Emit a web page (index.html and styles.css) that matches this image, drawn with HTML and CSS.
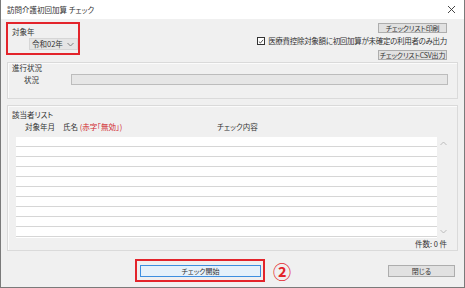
FILE: index.html
```html
<!DOCTYPE html>
<html lang="ja">
<head>
    <meta charset="UTF-8">
    <title>訪問介護初回加算 チェック</title>
    <link rel="stylesheet" href="styles.css">
</head>
<body>
    <div class="window">
        <div class="titlebar">
            <span class="title">訪問介護初回加算 チェック</span>
            <svg class="close-x" width="9" height="9" viewBox="0 0 9 9">
                <path d="M1 1 L8 8 M8 1 L1 8" stroke="#333" stroke-width="0.9" fill="none"/>
            </svg>
        </div>

        <div class="body">
            <!-- 対象年と出力ボタン -->
            <div class="top">
                <div class="year-box">
                    <div class="label">対象年</div>
                    <div class="select">
                        <span>令和02年</span>
                        <svg width="7" height="5" viewBox="0 0 7 5">
                            <path d="M0.5 1 L3.5 4 L6.5 1" stroke="#777" stroke-width="0.9" fill="none"/>
                        </svg>
                    </div>
                </div>
                <div class="actions">
                    <button class="btn btn-small">チェックリスト印刷</button>
                    <label class="check">
                        <span class="checkbox">
                            <svg width="7" height="7" viewBox="0 0 7 7">
                                <path d="M1 3.6 L2.8 5.3 L6 1.5" stroke="#222" stroke-width="0.9" fill="none"/>
                            </svg>
                        </span>
                        医療費控除対象額に初回加算が未確定の利用者のみ出力
                    </label>
                    <button class="btn btn-small">チェックリストCSV出力</button>
                </div>
            </div>

            <!-- 進行状況 -->
            <div class="group progress-group">
                <div class="group-title">進行状況</div>
                <div class="progress-row">
                    <span class="progress-label">状況</span>
                    <div class="progress"></div>
                </div>
            </div>

            <!-- 該当者リスト -->
            <div class="group list-group">
                <div class="group-title">該当者リスト</div>
                <div class="list-head">
                    <span class="col-month">対象年月</span>
                    <span class="col-name">氏名 <em class="red">(赤字「無効」)</em></span>
                    <span class="col-check">チェック内容</span>
                </div>
                <div class="list-wrap">
                    <div class="list">
                        <div class="row"></div>
                        <div class="row"></div>
                        <div class="row"></div>
                        <div class="row"></div>
                        <div class="row"></div>
                        <div class="row"></div>
                        <div class="row"></div>
                        <div class="row"></div>
                        <div class="row"></div>
                        <div class="row"></div>
                    </div>
                    <div class="scroll">
                        <svg width="7" height="5" viewBox="0 0 7 5">
                            <path d="M0.5 4 L3.5 1 L6.5 4" stroke="#b5b5b5" stroke-width="0.9" fill="none"/>
                        </svg>
                        <svg width="7" height="5" viewBox="0 0 7 5">
                            <path d="M0.5 1 L3.5 4 L6.5 1" stroke="#b5b5b5" stroke-width="0.9" fill="none"/>
                        </svg>
                    </div>
                </div>
                <div class="count">件数: 0 件</div>
            </div>

            <!-- 下部ボタン -->
            <div class="footer">
                <div class="start-box">
                    <button class="btn btn-start">チェック開始</button>
                </div>
                <span class="step">②</span>
                <button class="btn btn-close">閉じる</button>
            </div>
        </div>
    </div>
</body>
</html>
```

FILE: styles.css
```css
/* Ventana general */
body {
    margin: 0;
    padding: 0;
    font-family: "Noto Sans CJK JP", "Noto Sans", sans-serif;
    font-size: 7.5px;
    font-feature-settings: "palt";
    color: #333;
}

.window {
    width: 465px;
    height: 288px;
    box-sizing: border-box;
    border: 1px solid #7a7a7a;
    border-top: none;
    background: #f0f0f0;
    display: flex;
    flex-direction: column;
}

.titlebar {
    height: 19px;
    flex-shrink: 0;
    background: #fff;
    display: flex;
    align-items: center;
    justify-content: space-between;
    padding: 0 8px 0 6px;
}

.title {
    font-size: 7.5px;
    line-height: 10px;
    color: #333;
}

.body {
    flex: 1;
    display: flex;
    flex-direction: column;
}

/* Parte superior */
.top {
    display: flex;
    justify-content: space-between;
    align-items: flex-start;
    height: 39px;
    margin-top: 3px;
    padding: 0 17px 0 5px;
    flex-shrink: 0;
}

.year-box {
    width: 74px;
    height: 33px;
    box-sizing: border-box;
    border: 2px solid #e3242b;
    padding: 3px 0 0 4px;
}

.label {
    line-height: 10px;
}

.select {
    margin: 1px 0 0 17px;
    width: 49px;
    height: 12px;
    box-sizing: border-box;
    background: #e5e5e5;
    border: 1px solid #d6d6d6;
    display: flex;
    align-items: center;
    justify-content: space-between;
    padding: 0 3px 0 2px;
    line-height: 10px;
}

.actions {
    display: flex;
    flex-direction: column;
    align-items: flex-end;
}

.btn {
    font-family: "Noto Sans CJK JP", "Noto Sans", sans-serif;
    font-size: 7px;
    font-feature-settings: "palt";
    color: #333;
    background: #e1e1e1;
    border: 1px solid #adadad;
    padding: 0;
    line-height: 8px;
    white-space: nowrap;
    box-sizing: border-box;
}

.btn-small {
    width: 69px;
    height: 10px;
    letter-spacing: -0.2px;
}

.actions .btn-small:first-child {
    margin-top: 1px;
}

.check {
    display: flex;
    align-items: center;
    height: 10px;
    margin: 3px 0 4px;
    line-height: 10px;
    letter-spacing: -0.3px;
    white-space: nowrap;
}

.checkbox {
    width: 8px;
    height: 8px;
    box-sizing: border-box;
    border: 1px solid #333;
    background: #fff;
    display: flex;
    align-items: center;
    justify-content: center;
    margin-right: 3px;
}

/* Grupos */
.group {
    margin: 0 6px;
    border: 1px solid #dadada;
    box-shadow: inset 1px 1px 0 #fbfbfb;
    box-sizing: border-box;
    flex-shrink: 0;
}

.group-title {
    line-height: 10px;
    padding-left: 4px;
}

.progress-group {
    margin-top: 1px;
    height: 37px;
    padding-top: 0;
}

.progress-row {
    display: flex;
    align-items: center;
    margin-top: 1px;
    padding-right: 9px;
}

.progress-label {
    width: 47px;
    padding-left: 16px;
    box-sizing: content-box;
    line-height: 10px;
}

.progress {
    flex: 1;
    height: 11px;
    box-sizing: border-box;
    background: #e6e6e6;
    border: 1px solid #bcbcbc;
}

.list-group {
    margin-top: 6px;
    height: 146px;
    padding-top: 4px;
}

.list-head {
    display: flex;
    margin-top: 2px;
    padding-left: 17px;
    line-height: 10px;
}

.col-month {
    width: 38px;
}

.col-name {
    width: 154px;
}

.red {
    font-style: normal;
    color: #d0282e;
}

.list-wrap {
    display: flex;
    margin: 5px 0 0 8px;
    width: 433px;
    height: 101px;
}

.list {
    flex: 1;
    background: #fff;
}

.row {
    height: 10px;
    box-sizing: border-box;
    border-bottom: 1px solid #d6d6d6;
}

.scroll {
    width: 12px;
    display: flex;
    flex-direction: column;
    align-items: center;
    justify-content: space-between;
    padding: 4px 0 4px;
    box-sizing: border-box;
}

.count {
    text-align: right;
    padding-right: 10px;
    line-height: 10px;
    margin-top: 1px;
}

/* Botones inferiores */
.footer {
    display: flex;
    align-items: center;
    padding: 8px 9px 0 134px;
}

.start-box {
    width: 130px;
    height: 23px;
    box-sizing: border-box;
    border: 2px solid #e3242b;
    padding: 4px 0 0 3px;
}

.btn-start {
    width: 121px;
    height: 12px;
    background: #e5f1fb;
    border-color: #3d8ee0;
    display: block;
}

.step {
    margin-left: 8px;
    font-size: 18px;
    font-weight: 700;
    line-height: 20px;
    color: #e3242b;
}

.btn-close {
    margin-left: auto;
    width: 67px;
    height: 12px;
}
```
